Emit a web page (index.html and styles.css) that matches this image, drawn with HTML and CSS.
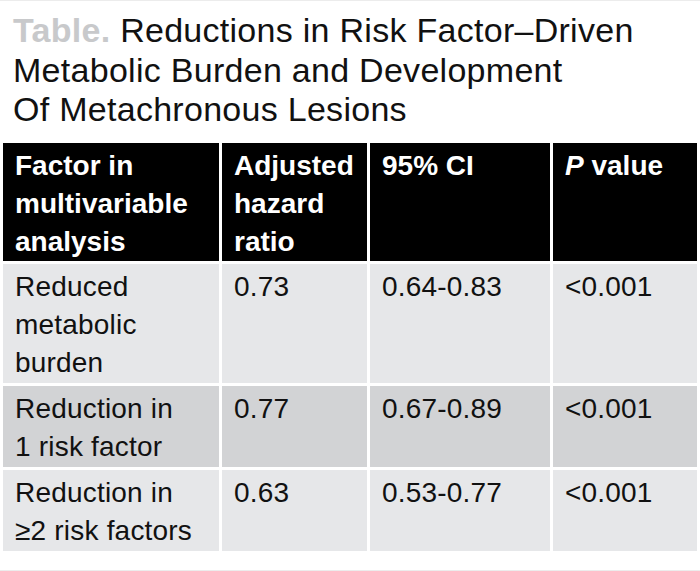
FILE: index.html
```html
<!DOCTYPE html>
<html>
<head>
<meta charset="utf-8">
<link rel="stylesheet" href="styles.css">
</head>
<body>
<div class="frame">
  <h1 class="title"><span class="label">Table.</span> Reductions in Risk Factor–Driven<br>Metabolic Burden and Development<br>Of Metachronous Lesions</h1>
  <table class="data">
    <colgroup>
      <col class="c1"><col class="c2"><col class="c3"><col class="c4">
    </colgroup>
    <thead>
      <tr>
        <th>Factor in<br>multivariable<br>analysis</th>
        <th>Adjusted<br>hazard<br>ratio</th>
        <th>95% CI</th>
        <th><i>P</i> value</th>
      </tr>
    </thead>
    <tbody>
      <tr class="light">
        <td>Reduced<br>metabolic<br>burden</td>
        <td>0.73</td>
        <td>0.64-0.83</td>
        <td>&lt;0.001</td>
      </tr>
      <tr class="dark">
        <td>Reduction in<br>1 risk factor</td>
        <td>0.77</td>
        <td>0.67-0.89</td>
        <td>&lt;0.001</td>
      </tr>
      <tr class="light">
        <td>Reduction in<br>≥2 risk factors</td>
        <td>0.63</td>
        <td>0.53-0.77</td>
        <td>&lt;0.001</td>
      </tr>
    </tbody>
  </table>
</div>
</body>
</html>
```
FILE: styles.css
```css
html, body {
  margin: 0;
  padding: 0;
  background: #ffffff;
}
body {
  font-family: "Liberation Sans", Arial, Helvetica, sans-serif;
  color: #111111;
}
.frame {
  width: 700px;
  height: 571px;
  box-sizing: border-box;
  border-top: 1px solid #ececec;
  border-bottom: 1px solid #ececec;
}
.title {
  margin: 10px 0 10px 13px;
  font-size: 34px;
  font-weight: normal;
  line-height: 39.5px;
  letter-spacing: 0.28px;
  color: #111111;
}
.label {
  font-weight: bold;
  color: #c8c9cb;
}
.data {
  width: 700px;
  border-collapse: separate;
  border-spacing: 3px;
  table-layout: fixed;
  font-size: 28px;
  line-height: 38px;
  letter-spacing: 0.2px;
}
.c1 { width: 216px; }
.c2 { width: 145px; }
.c3 { width: 180px; }
.c4 { width: 144px; }
.data th,
.data td {
  vertical-align: top;
  text-align: left;
  padding: 4px 4px 1px 12px;
  box-sizing: border-box;
}
.data th {
  background: #000000;
  color: #ffffff;
  font-weight: bold;
  letter-spacing: 0;
  padding-bottom: 0;
}
.data th i {
  font-style: italic;
}
.light td {
  background: #e6e7e9;
}
.dark td {
  background: #d2d3d5;
}
```
